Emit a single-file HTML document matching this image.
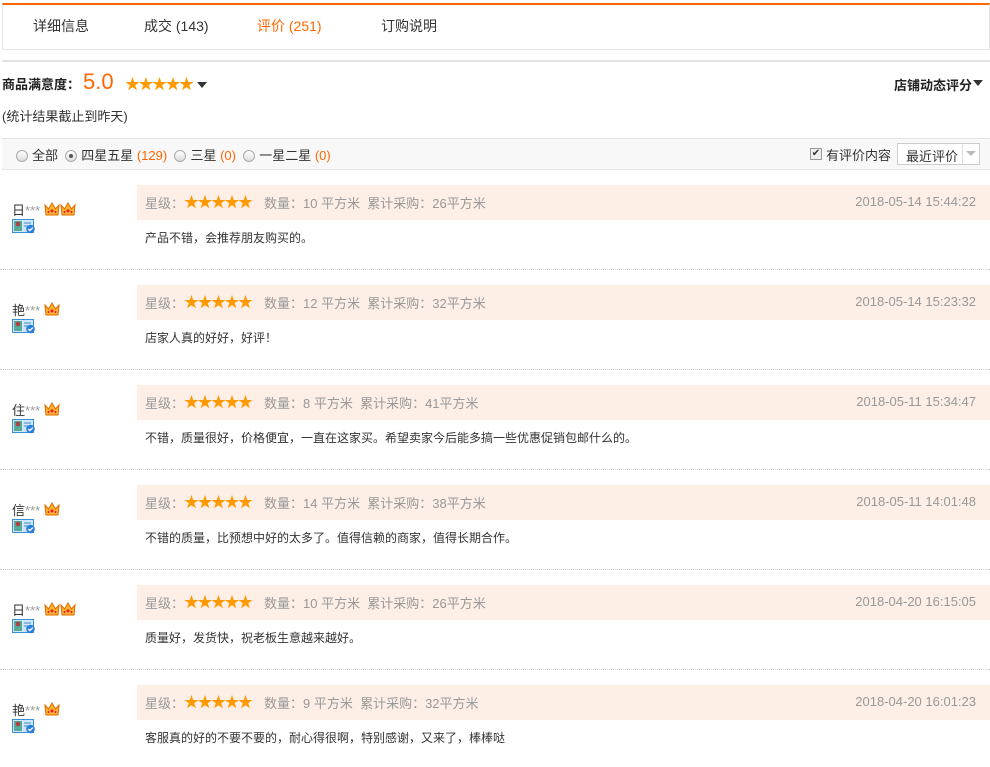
<!DOCTYPE html>
<html><head><meta charset="utf-8"><style>
*{margin:0;padding:0;box-sizing:border-box}
body{width:990px;height:767px;overflow:hidden;background:#fff;font-family:"Liberation Sans","Noto Sans CJK SC",sans-serif;font-size:12px;color:#333;position:relative}
.a{position:absolute;white-space:nowrap}
.tabs{left:2px;top:3px;width:988px;height:47px;border:1px solid #e5e5e5;border-top:2px solid #f60}
.tab{top:16px;font-size:14px;color:#333}
.st{color:#f90;font-size:15px;letter-spacing:-1.5px}
.o{color:#f60}
.g{color:#999}
.meta{left:137px;width:853px;height:35px;background:#fdeee6;font-size:13px;color:#999}
.radio{display:inline-block;width:12px;height:12px;border:1px solid #aaa;border-radius:50%;background:linear-gradient(#fff,#ddd);vertical-align:-2px;margin-right:4px;position:relative}
.sep{left:0;width:990px;border-top:1px dotted #ccc}
</style></head><body>
<div class="a tabs"></div>
<div class="a tab" style="left:33px">详细信息</div>
<div class="a tab" style="left:144px">成交 (143)</div>
<div class="a tab o" style="left:257px">评价 (251)</div>
<div class="a tab" style="left:381px">订购说明</div>
<div class="a" style="left:2px;top:60px;width:988px;height:2px;background:#e3e3e3"></div>
<div class="a" style="left:2px;top:74px;font-size:13px;font-weight:bold;color:#222">商品满意度：</div>
<div class="a o" style="left:83px;top:69px;font-size:22px">5.0</div>
<div class="a st" style="left:125px;top:73px">★★★★★</div>
<div class="a" style="left:197px;top:82px;border:5px solid transparent;border-top:6px solid #333"></div>
<div class="a" style="left:894px;top:75px;font-size:13px;font-weight:bold;color:#222">店铺动态评分</div>
<div class="a" style="left:973px;top:80px;border:5px solid transparent;border-top:6px solid #333"></div>
<div class="a" style="left:2px;top:106px;font-size:13px">(统计结果截止到昨天)</div>
<div class="a" style="left:2px;top:138px;width:988px;height:32px;background:#f8f8f8;border-top:1px solid #e3e3e3;border-bottom:1px solid #e3e3e3"></div>
<div class="a" style="left:16px;top:145px;font-size:13px"><span class="radio"></span>全部 &nbsp;<span class="radio"><span style="position:absolute;left:3px;top:3px;width:4px;height:4px;border-radius:50%;background:#555"></span></span>四星五星 <span class="o">(129)</span> &nbsp;<span class="radio"></span>三星 <span class="o">(0)</span> &nbsp;<span class="radio"></span>一星二星 <span class="o">(0)</span></div>
<div class="a" style="left:810px;top:148px;width:12px;height:12px;border:1px solid #999;background:#eee;font-size:10px;line-height:10px;text-align:center;color:#333">✔</div>
<div class="a" style="left:826px;top:145px;font-size:13px">有评价内容</div>
<div class="a" style="left:897px;top:143px;width:83px;height:22px;border:1px solid #ccc;background:#fff;font-size:13px;padding:2px 0 0 8px">最近评价</div>
<div class="a" style="left:962px;top:144px;width:1px;height:20px;background:#ddd"></div>
<div class="a" style="left:966px;top:151px;border:5px solid transparent;border-top:5px solid #bbb"></div>

<div id="r"></div>
<script>
var d=[["日***",2,"10","26","2018-05-14 15:44:22","产品不错，会推荐朋友购买的。"],
["艳***",1,"12","32","2018-05-14 15:23:32","店家人真的好好，好评！"],
["住***",1,"8","41","2018-05-11 15:34:47","不错，质量很好，价格便宜，一直在这家买。希望卖家今后能多搞一些优惠促销包邮什么的。"],
["信***",1,"14","38","2018-05-11 14:01:48","不错的质量，比预想中好的太多了。值得信赖的商家，值得长期合作。"],
["日***",2,"10","26","2018-04-20 16:15:05","质量好，发货快，祝老板生意越来越好。"],
["艳***",1,"9","32","2018-04-20 16:01:23","客服真的好的不要不要的，耐心得很啊，特别感谢，又来了，棒棒哒"]];
var crown='<svg width="16" height="14" viewBox="0 0 16 14" style="vertical-align:-1px"><path d="M1 3L4.5 7L8 1L11.5 7L15 3L14 13H2Z" fill="#fbb52a" stroke="#e06a00" stroke-width="1"/><path d="M3 10h10" stroke="#f7d060" stroke-width="2"/><circle cx="8" cy="9" r="1.6" fill="#e22"/><circle cx="4.5" cy="10" r="1.1" fill="#e22"/><circle cx="11.5" cy="10" r="1.1" fill="#e22"/></svg>';
var icon='<svg width="24" height="15" viewBox="0 0 24 15"><rect x="0.5" y="0.5" width="21" height="13" fill="#cfe6f7" stroke="#3b8fd6"/><rect x="2" y="2" width="8" height="10" fill="#5a9"/><circle cx="6" cy="5" r="2.3" fill="#a44"/><path d="M12 4h7M12 7h6" stroke="#3b8fd6"/><circle cx="18.5" cy="10" r="4.3" fill="#2a7de1"/><path d="M16.3 10l1.6 1.6 3-3" stroke="#fff" stroke-width="1.3" fill="none"/></svg>';
var h='';
d.forEach(function(r,i){var t=100*i;
h+='<div class="a" style="left:12px;top:'+(200+t)+'px;font-size:13px">'+r[0].slice(0,1)+'<span class="g">***</span> '+crown.repeat(r[1])+'</div>';
h+='<div class="a" style="left:12px;top:'+(219+t)+'px">'+icon+'</div>';
h+='<div class="a meta" style="top:'+(185+t)+'px"><span class="a" style="left:8px;top:8px">星级：</span><span class="a st" style="left:47px;top:6px">★★★★★</span><span class="a" style="left:127px;top:8px">数量：'+r[2]+' 平方米 &nbsp;累计采购：'+r[3]+'平方米</span><span class="a" style="right:14px;top:9px">'+r[4]+'</span></div>';
h+='<div class="a" style="left:145px;top:'+(229+t)+'px">'+r[5]+'</div>';
if(i<5)h+='<div class="a sep" style="top:'+(269+t)+'px"></div>';});
document.getElementById('r').innerHTML=h;
</script>
</body></html>
